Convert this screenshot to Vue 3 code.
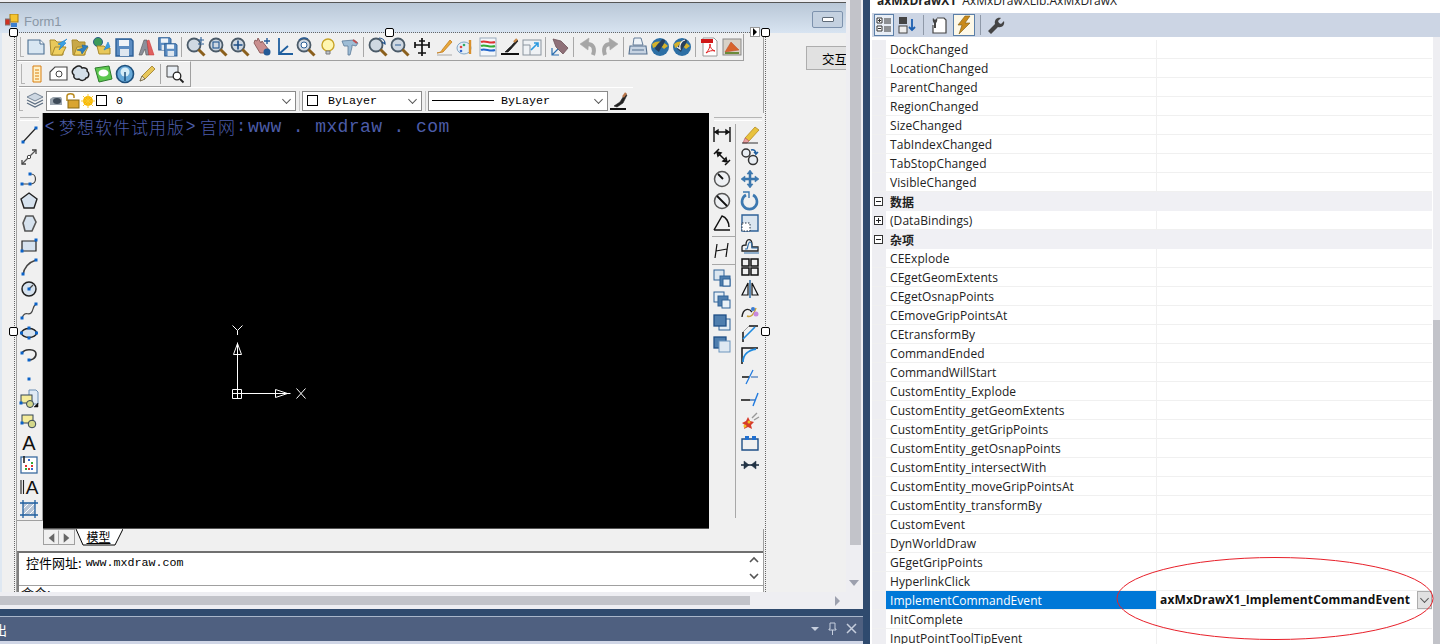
<script setup>
const n = (x, y) => `<rect x="${x - 1.5}" y="${y - 1.5}" width="3" height="3" fill="#0a62c8"/>`
const p = (d, s = '#333', w = 1.2, f = 'none') => `<path d="${d}" stroke="${s}" stroke-width="${w}" fill="${f}"/>`
const mag = inner => `<circle cx="8" cy="8" r="6.500" fill="#cfd8e2" stroke="#4a5a68" stroke-width="1.800"/>${inner}<path d="M12.500 12.500L18.500 18.500" stroke="#8a5f1c" stroke-width="3"/>`
const folder = (c, a) => p('M2 3h5l2 2h6v13H3z', '#a98a2d', 1, c) + p('M4 18l3-8h11l-4 8z', '#a98a2d', 1, '#f0d060') + a
const floppy = (x, y, s) => `<g transform="translate(${x} ${y}) scale(${s})">${p('M1 1h15l2 2v15H1z', '#2d5f96', 1.4, '#5b8cc2')}<rect x="4" y="2" width="10" height="6" fill="#eef3f8"/><rect x="5" y="11" width="9" height="7" fill="#dfe7ef"/></g>`
const sq = (a, b, ca, cb) => `<rect x="${a}" y="${a}" width="10" height="10" fill="${ca}" stroke="#2f6298"/><rect x="${b}" y="${b}" width="10" height="10" fill="${cb}" stroke="#2f6298"/>`
const globe = `<circle cx="10" cy="10" r="9" fill="#2c6fa5"/><path d="M2 7c5-4 11-3 16 2l-4 3c-3-3-7-3-11-1z" fill="#d4b22c"/><path d="M9 15c2-5 6-8 6-12l-3-1c-1 3-6 5-7 10z" fill="#26405e"/>`

const icons = {
  nw: p('M2 3h12l4 4v10H2z', '#4c6f92', 1.1, '#d8e6f2') + p('M14 3v4h4', '#4c6f92', 1, '#fff'),
  open: folder('#e8c85a', p('M19 2l-9 5 3 1-2 5 7-7-2-1z', '#1c7fc9', .6, '#3aa0e4')),
  openw: folder('#c8a848', p('M18 9l-6 8-1-3-4-1 6-2-1-3z', '#1c5f99', .6, '#2c7fc4')),
  webopen: `<circle cx="6" cy="5" r="4.500" fill="#3c9a5a" stroke="#2b5d88"/>` + p('M5 9h7l2 2h4v6H7z', '#a98a2d', 1, '#e8c85a') + p('M16 5l-4 8 6-3z', '#1c7fc9', .6, '#3aa0e4'),
  save: floppy(1, 1, 1),
  saveas: p('M3 18L8 3h3l2 15h-3l-1-6-3 6z', '#555', .6, '#8b8f9a') + p('M11 4l2-1 5 15h-5z', '#c93030', .5, '#e06060'),
  saveall: floppy(0, 0, .72) + floppy(6, 6, .72),
  zoompm: mag('') + p('M15 0v6M12 3h6M12 7h6', '#2d5f96', 1.1),
  zoomw: mag(`<rect x="5" y="5" width="6" height="6" fill="none" stroke="#2d5f96" stroke-width="1.200"/>`),
  zoompan: mag(p('M8 3.500v9M3.500 8h9', '#1c4e88', 1.6)),
  hand: p('M2 6l6 10h7l2-3-7-9-1 2-3-5-1 3-2-1z', '#7f4d4d', .8, '#c98f8f') + `<circle cx="15" cy="15" r="3.500" fill="#245a96"/>` + p('M15 1v6M12 4h6', '#245a96', 1.4),
  ucs: p('M5 1v16h14M5 17l9-8', '#1f5f9f', 1.8),
  orbit: mag(`<circle cx="8" cy="8" r="3" fill="#fff" stroke="#2d5f96"/>`) + p('M3 3a8 8 0 0 1 9-1', '#2d5f96', 1.4),
  bulb: `<circle cx="10" cy="8" r="6" fill="#fff6b0" stroke="#c8a428" stroke-width="1.400"/>` + p('M8 14h4v3H8z', '#7b7b7b', 1, '#bfc6cc'),
  hammer: p('M2 4l12-1 4 3-2 3-4-1v2l-2 8H8V9H4z', '#5a7a98', .8, '#9ebdd6') + p('M13 3l4 3', '#c05050', 2),
  rtzoom: mag('') + p('M11 1c4 0 6 3 6 6l-3-2', '#1c4e88', 1.2),
  zoom2: mag(`<path d="M5 8h6" stroke="#2d5f96"/>`),
  plane: p('M10 1v18M3 8h14M6 16h8M7 4h6M3 5v6M17 5v6', '#111', 1.7),
  pen: p('M3 16c4-1 4-1 5-3l8-10 2 2-9 10z', '#c27b1c', .8, '#e8a93c') + p('M3 18h15', '#aaa', 1),
  palette: `<ellipse cx="8" cy="11" rx="7" ry="6" fill="#e4eef6" stroke="#7fa6c8"/><circle cx="5" cy="10" r="1.300" fill="#d44"/><circle cx="8" cy="8" r="1.300" fill="#3a6"/><circle cx="5" cy="14" r="1.300" fill="#36c"/>` + p('M14 3v14', '#d9902c', 2.4),
  stripes: `<rect x="2" y="1" width="16" height="18" fill="#f2f6fa" stroke="#9ab"/>` + p('M3 5c4-2 9 2 14 0', '#d33', 2) + p('M3 9c4-2 9 2 14 0', '#3a3', 2) + p('M3 13c4-2 9 2 14 0', '#26c', 2),
  brush: p('M1 17h18', '#111', 2) + p('M5 15l4-4c3-2 5-6 8-8l1 1c-2 3-5 5-7 8l-3 3z', '#111', .6, '#222') + p('M14 5l3-3', '#c98a4a', 2.4),
  viewlink: `<rect x="1" y="3" width="18" height="15" fill="#eff2f5" stroke="#8a949e"/>` + p('M1 8h7v10', '#8a949e', 1) + p('M9 13l7-7M12 6h4v4', '#2c9ae0', 1.6),
  tag: p('M3 2l8 2 7 7-5 6-7-7z', '#6d5258', .8, '#8f7078') + p('M2 11v7h7M2 18l6-6', '#2c6fb0', 1.2),
  undo: p('M15 18c2-6 1-11-6-11', '#a6a6a6', 4) + p('M11 1L2 7l8 6z', '#a6a6a6', .5, '#a6a6a6'),
  redo: p('M5 18c-2-6-1-11 6-11', '#a6a6a6', 4) + p('M9 1l9 6-8 6z', '#a6a6a6', .5, '#a6a6a6'),
  printer: p('M6 1h7l2 7H5z', '#55708f', .9, '#eef3f8') + p('M2 9h16l1 8H1z', '#55708f', 1.100, '#c6d3e2') + p('M4 13h12', '#55708f', 1),
  globe1: globe,
  globe2: globe + p('M13 3c-4 1-6 5-5 9l-3-2', '#f2f2f2', 1.2),
  pdf: `<path d="M3 1h11l3 3v15H3z" fill="#fff" stroke="#9a9a9a"/><rect x="1" y="2" width="12" height="4" fill="#d01818"/>` + p('M6 16c3-3 4-6 4-9 0 4 2 6 5 7-3-1-6 0-9 2z', '#e02020', 1),
  img: `<rect x="1" y="2" width="18" height="16" fill="#d8d2c8" stroke="#8a8a8a"/>` + p('M3 15L9 5l8 8z', '#b94a2c', .5, '#d8642c') + p('M3 16h14', '#6a8a3a', 2),
  prop: p('M6 2h8v16H6z', '#d87f10', 1, '#fff1c8') + p('M8 6h4M8 9h4M8 12h4M8 15h4', '#d87f10', 1),
  cloudrect: p('M1 8l5-5h12v13H1z', '#444', 1.1, '#fff') + `<circle cx="10" cy="10" r="3" fill="none" stroke="#444"/>`,
  cloud: p('M5 3c2-2 5-1 6 1 3-1 6 1 5 3 3 2 2 7-1 7-1 3-5 3-7 1-3 1-6-1-5-4-3-2-2-6 2-8z', '#222', 1.5, '#d4dfe9'),
  note: `<path d="M2 4l14-2 3 13-13 3z" fill="#5dc84f" stroke="#2d7a2d"/><ellipse cx="10.500" cy="9" rx="5" ry="3.500" fill="#fff"/>`,
  wipe: `<circle cx="10" cy="10" r="8.500" fill="#66a8d8" stroke="#1d4f7c" stroke-width="1.600"/><circle cx="10" cy="8" r="4.500" fill="#d6edf8"/>` + p('M10 8v9', '#1d4f7c', 1.5),
  pencil: p('M3 17l2-5L15 2l3 3L8 15z', '#9b7a24', .8, '#e8c75a') + p('M3 17l2-5 3 3z', '#333', .5, '#efe2c0'),
  zoomdoc: p('M2 2h11v11H2z', '#444', 1, '#e8eef4') + `<circle cx="12" cy="12" r="3.800" fill="#fff" stroke="#222" stroke-width="1.300"/>` + p('M15 15l3.500 3.500', '#222', 1.8),
  layers: p('M10 2l8 4-8 4-8-4z', '#5a6c80', .8, '#cdd7e2') + p('M2 9l8 4 8-4M2 12l8 4 8-4', '#5a6c80', 1.2),
  linebrush: p('M1 18h16', '#111', 2, 'none') + p('M5 15l6-4 5-8 2 1-4 8-6 4z', '#222', .6, '#222') + p('M14 6l3-4', '#b9764a', 2.4),

  line: p('M4 17L17 3', '#222') + n(4, 17) + n(17, 3),
  xline: p('M3 17L17 3', '#555') + `<circle cx="10" cy="10" r="1.700" fill="#fff" stroke="#444"/>` + p('M3 13v4h4M13 3h4v4', '#444', 1.3),
  pline: p('M3 15h9c6 0 6-10 0-10', '#444') + n(3, 15) + n(11, 15) + n(11, 5),
  pent: p('M10 2l8 6-3 9H5L2 8z', '#222', 1.4, '#d6e2ee'),
  poly: p('M7 3h7l3 6-4 9H6L4 10z', '#555', 1.6, '#d6e2ee'),
  rect: p('M3 6h14v10H3z', '#222', 1.2, '#d6e2ee') + n(3, 16) + n(17, 5),
  arc: p('M4 18C5 10 11 5 17 3', '#444', 1.4) + n(4, 17) + n(17, 3),
  circle: `<circle cx="10" cy="10" r="7" fill="#d6e2ee" stroke="#222" stroke-width="1.500"/>` + p('M10 10l4-4', '#444') + n(10, 10),
  spline: p('M3 17c3-8 6-2 9-5s1-6 5-9', '#444', 1.2) + n(3, 17) + n(17, 3),
  ellipse: `<ellipse cx="10" cy="10" rx="7.500" ry="4.500" fill="#d6e2ee" stroke="#222" stroke-width="1.500"/>` + n(10, 5) + n(10, 15) + n(2.500, 10) + n(17.500, 10),
  ellarc: p('M3 8c3-5 14-4 14 1s-5 6-7 6', '#333', 1.6) + n(3, 8) + n(10, 15),
  point: n(10, 12),
  block1: p('M10 1h7l2 2v12h-9z', '#6b8fb5', 1, '#e0eaf4') + `<rect x="2" y="6" width="11" height="8" fill="#f5ec9a" stroke="#345"/><circle cx="11" cy="15" r="3.500" fill="#d4d88a" stroke="#345"/>` + p('M15 18l4-4v4z', '#111', .5, '#111') + n(2, 14),
  block2: `<rect x="3" y="4" width="11" height="8" fill="#f5ec9a" stroke="#345"/><circle cx="13" cy="13" r="3.800" fill="#d4d88a" stroke="#345"/>` + n(3, 12),
  a: `<text x="10" y="17" text-anchor="middle" font-family="Liberation Sans" font-size="20" fill="#111">A</text>`,
  table: `<rect x="2" y="2" width="16" height="16" fill="#fff" stroke="#3b6ca0" stroke-width="1.300"/><rect x="9" y="4" width="2" height="2" fill="#36c"/><rect x="12" y="7" width="2" height="2" fill="#3a3"/><rect x="6" y="10" width="2" height="2" fill="#d33"/><rect x="9" y="13" width="2" height="2" fill="#d33"/><rect x="12" y="13" width="2" height="2" fill="#36c"/><rect x="6" y="13" width="2" height="2" fill="#3a3"/><rect x="12" y="10" width="2" height="2" fill="#d33"/>` + p('M5 1v7', '#222', 1.6),
  ia: p('M2 3v14M4.500 3v14', '#222', 1.1) + `<text x="13" y="17" text-anchor="middle" font-family="Liberation Sans" font-size="19" fill="#111">A</text>`,
  hatch: `<rect x="4" y="4" width="12" height="12" fill="#b9c6d6"/>` + p('M4 10l6-6M4 16L16 4M10 16l6-6', '#fff', 1) + p('M1 4h18M1 16h18M4 1v18M16 1v18', '#1f5f9f', 1.3),

  dimlin: p('M2 2v15M18 2v15M3 7h14M3 7l3-2v4zM17 7l-3-2v4z', '#111', 1.4),
  dimal: p('M2 7l5-5M13 18l5-5M5 5l10 10M5 5l1 4 3-3zM15 15l-1-4-3 3z', '#111', 1.5),
  dimrad: `<circle cx="10" cy="10" r="7.500" fill="#eef0f3" stroke="#555" stroke-width="1.500"/>` + p('M6 5l5 5', '#111', 1.8),
  dimdia: `<circle cx="10" cy="10" r="7.500" fill="#eef0f3" stroke="#555" stroke-width="1.500"/>` + p('M5 5l10 10', '#111', 1.8),
  dimang: p('M2 17h16M2 17L10 3c4 1 7 6 7 11', '#111', 1.5),
  dimbase: p('M5 4L3 18M16 3l-2 14M4 11l11-2', '#111', 1.2),
  st1: sq(2, 8, '#dbe6f0', '#4f7eae') + `<rect x="11" y="11" width="7" height="7" fill="#eaf1f7" stroke="#2f6298"/>`,
  st2: sq(2, 6, '#e6eef5', '#4f7eae') + `<rect x="10" y="10" width="8" height="8" fill="#eaf1f7" stroke="#2f6298"/>`,
  st3: `<rect x="7" y="7" width="11" height="11" fill="#e6eef5" stroke="#2f6298"/><rect x="2" y="3" width="12" height="11" fill="#4f7eae" stroke="#1f4f86" stroke-width="1.300"/>`,
  st4: `<rect x="2" y="3" width="12" height="11" fill="#4f7eae" stroke="#1f4f86" stroke-width="1.300"/><rect x="7" y="7" width="11" height="11" fill="#dfe9f2" stroke="#6d95bd"/>`,
  erase: p('M5 13L15 2l4 3L9 16z', '#b58a20', .8, '#e8c23c') + p('M5 13l4 3-2 2H3z', '#b55', .6, '#e9a0a0') + p('M2 18h16', '#333', 1),
  copy: `<circle cx="6" cy="6" r="4" fill="#e9eef3" stroke="#333" stroke-width="1.500"/><circle cx="13" cy="13" r="4.500" fill="#e9eef3" stroke="#333" stroke-width="1.500"/>` + p('M11 3c3-1 5 1 5 4l2-2M16 7l-2-2', '#1f5f9f', 1.6),
  move: p('M10 1l3 4h-2v4h4V7l4 3-4 3v-2h-4v4h2l-3 4-3-4h2v-4H5v2l-4-3 4-3v2h4V5H7z', '#2f6ca5', .5, '#3c78b0'),
  rotate: p('M6 4a7.500 7.500 0 1 0 7 0', '#3c78b0', 2.6) + p('M3 1h6v6', '#3c78b0', 1.4),
  scale: p('M2 2h16v16H2z', '#2f6298', 1.4, '#dbe6f0') + `<rect x="2" y="10" width="8" height="8" fill="#fff" stroke="#234" stroke-dasharray="1.500 1.500"/>`,
  offset: p('M2 16v-4c0-2 3-2 4-2 0-7 6-7 6-1v3h6v4z', '#222', 1.3) + p('M4 18h15M5 14h2c1-1 1-7 3-7s2 3 2 6h6', '#2f6ca5', 1.2),
  array: p('M2 2h7v7H2zM11 2h7v7h-7zM2 11h7v7H2zM11 11h7v7h-7z', '#111', 1.5),
  mirror: p('M10 1v18', '#2f6ca5', 1.5) + p('M8 4v12H2zM12 4v12h6z', '#111', 1.2, '#eef2f6'),
  blend: p('M2 16c1-9 7-9 10-5', '#222', 1.4) + p('M7 15c4 2 7-2 9-8', '#c8a03c', 1.4) + `<circle cx="16" cy="13" r="2.500" fill="#c78add"/><circle cx="13" cy="8" r="2" fill="#3a7bd0"/>`,
  chamfer: p('M3 19V9', '#111', 1.5) + p('M9 3h9', '#111', 1.5) + p('M3 9l6-6', '#888', .8, 'none') + p('M3 16L15 4', '#1f8adf', 1.6),
  fillet: p('M2 19V3h16', '#111', 1.5) + p('M3 17c0-8 6-12 13-13', '#1f8adf', 1.8),
  trim: p('M2 10h7', '#111', 1.5) + p('M11 10h7', '#1f5fb0', 1, 'none') + p('M6 17L13 3', '#1f7adf', 1.3),
  extend: p('M1 11h9', '#111', 1.5) + p('M10 11h5', '#1f5fb0', 1.2) + p('M13 17l5-13', '#1f7adf', 1.4),
  explode: `<path d="M2 12l4-2 2-4 2 4 4 1-3 3 1 4-4-2-4 2 1-4z" fill="#d63a2a"/><circle cx="5" cy="15" r="1.500" fill="#f0c020"/><circle cx="9" cy="11" r="1.500" fill="#f0c020"/>` + p('M12 7l5-5M14 9l5-3', '#999', 1.4),
  stretch: p('M2 17V6h16v11z', '#1f4f86', 1.4) + `<rect x="5" y="3" width="4" height="4" fill="#1f6fd0"/><rect x="12" y="3" width="4" height="4" fill="#1f6fd0"/>`,
  join: p('M1 10h18', '#234', 1.6) + p('M4 6l5 4-5 4zM16 6l-5 4 5 4z', '#234', .5, '#234'),
}

const row1 = ['nw', 'open', 'openw', 'webopen', 'save', 'saveas', 'saveall', '|', 'zoompm', 'zoomw', 'zoompan', 'hand', 'ucs', 'orbit', 'bulb', 'hammer', '|', 'rtzoom', 'zoom2', 'plane', 'pen', 'palette', 'stripes', 'brush', 'viewlink', '|', 'tag', '|', 'undo', 'redo', '|', 'printer', 'globe1', 'globe2', '|', 'pdf', 'img']
const row2 = ['prop', 'cloudrect', 'cloud', 'note', 'wipe', 'pencil', '|', 'zoomdoc']
const leftBar = ['line', 'xline', 'pline', 'pent', 'poly', 'rect', 'arc', 'circle', 'spline', 'ellipse', 'ellarc', 'point', 'block1', 'block2', 'a', 'table', 'ia', 'hatch']
const dimBar = ['dimlin', 'dimal', 'dimrad', 'dimdia', 'dimang', '-', 'dimbase', '-', 'st1', 'st2', 'st3', 'st4']
const editBar = ['erase', 'copy', 'move', 'rotate', 'scale', 'offset', 'array', 'mirror', 'blend', 'chamfer', 'fillet', 'trim', 'extend', 'explode', 'stretch', 'join']

const rows = [
  'DockChanged', 'LocationChanged', 'ParentChanged', 'RegionChanged', 'SizeChanged', 'TabIndexChanged', 'TabStopChanged', 'VisibleChanged',
  { cat: '数据' }, { name: '(DataBindings)', plus: true }, { cat: '杂项' },
  'CEExplode', 'CEgetGeomExtents', 'CEgetOsnapPoints', 'CEmoveGripPointsAt', 'CEtransformBy', 'CommandEnded', 'CommandWillStart',
  'CustomEntity_Explode', 'CustomEntity_getGeomExtents', 'CustomEntity_getGripPoints', 'CustomEntity_getOsnapPoints', 'CustomEntity_intersectWith', 'CustomEntity_moveGripPointsAt', 'CustomEntity_transformBy',
  'CustomEvent', 'DynWorldDraw', 'GEgetGripPoints', 'HyperlinkClick',
  { name: 'ImplementCommandEvent', value: 'axMxDrawX1_ImplementCommandEvent' },
  'InitComplete', 'InputPointToolTipEvent',
].map(r => (typeof r === 'string' ? { name: r } : r))
</script>

<template>
  <div class="screen">
    <div class="left">
      <div class="design">
        <div class="form">
          <div class="titlebar">
            <svg class="form-ico" width="14" height="14" viewBox="0 0 14 14"><rect x="5" y="0" width="8" height="8" fill="#f4c430" stroke="#a97c10"/><rect x="0" y="5" width="5" height="6" fill="#d03020" stroke="#777"/><rect x="6" y="9" width="6" height="4" fill="#3d7fd0"/></svg>
            <span class="form-title">Form1</span>
            <span class="minbtn"><i></i></span>
          </div>
          <div class="client">
            <div class="control">
              <span class="handle h-tl"></span><span class="handle h-tc"></span><span class="handle h-tr"></span>
              <span class="handle h-ml"></span><span class="handle h-mr"></span>
              <span class="smart"></span>

              <div class="bar bar1">
                <span class="grip"></span>
                <template v-for="(ic, i) in row1" :key="i">
                  <span v-if="ic === '|'" class="sep"></span>
                  <svg v-else class="ico" viewBox="0 0 20 20" v-html="icons[ic]"></svg>
                </template>
              </div>
              <div class="bar bar2">
                <span class="grip"></span>
                <template v-for="(ic, i) in row2" :key="i">
                  <span v-if="ic === '|'" class="sep"></span>
                  <svg v-else class="ico" viewBox="0 0 20 20" v-html="icons[ic]"></svg>
                </template>
              </div>
              <div class="bar bar3">
                <span class="grip"></span>
                <svg class="ico" viewBox="0 0 20 20" v-html="icons.layers"></svg>
                <div class="combo combo-a">
                  <svg width="46" height="16" viewBox="0 0 46 16">
                    <path d="M1 6l3-2h8l1 2v6H1z" fill="#9aa4ae"/><ellipse cx="8" cy="8" rx="4" ry="3" fill="#3d4a58"/>
                    <path d="M18 8V3c0-3 7-3 7 0v2" fill="none" stroke="#b98a20" stroke-width="1.500"/><rect x="19" y="7" width="11" height="8" fill="#d9a530" stroke="#8a6a14"/>
                    <circle cx="39" cy="8" r="5" fill="#f8b800"/><path d="M39 1v14M32 8h14M34 3l10 10M44 3L34 13" stroke="#f8c830"/>
                  </svg>
                  <span class="swatch swatch-a"></span>
                  <span class="mono zero">0</span>
                  <span class="chev chev-end"></span>
                </div>
                <span class="thin-sep"></span>
                <div class="combo combo-b">
                  <span class="swatch"></span>
                  <span class="mono by1">ByLayer</span>
                  <span class="chev chev-end"></span>
                </div>
                <span class="thin-sep"></span>
                <div class="combo combo-c">
                  <span class="lt"></span>
                  <span class="mono by2">ByLayer</span>
                  <span class="chev chev-end"></span>
                </div>
                <svg class="ico brush-ico" viewBox="0 0 20 20" v-html="icons.linebrush"></svg>
              </div>

              <div class="middle">
                <div class="lefttools">
                  <span class="hgrip"></span>
                  <svg v-for="ic in leftBar" :key="ic" class="ico tool" viewBox="0 0 20 20" v-html="icons[ic]"></svg>
                </div>
                <div class="canvas">
                  <div class="wm">
                    <span class="lt-ch">&lt;</span><span class="cjk">梦想软件试用版</span><span class="lt-ch">&gt;</span><span class="cjk">官网</span><span class="colon">:</span><span class="url">www . mxdraw . com</span>
                  </div>
                  <svg class="ucs" width="90" height="85" viewBox="0 0 90 85">
                    <g fill="none" stroke="#fff" stroke-width="1">
                      <path d="M5.500 2.500l5 5 5-5M10.500 7.500V12"/>
                      <path d="M6.500 31.500h8l-4-11zM10.500 31.500v-12"/>
                      <path d="M10.500 31.500V66M14.500 70.500H48"/>
                      <path d="M5.500 66.500h9v9h-9zM10.500 66.500v9M5.500 70.500h9"/>
                      <path d="M48.500 66.500v8l12-4zM48.500 70.500h15"/>
                      <path d="M69.500 65.500l9 10M78.500 65.500l-9 10"/>
                    </g>
                  </svg>
                </div>
                <div class="righttools">
                  <span class="hgrip wide"></span>
                  <div class="tool-cols">
                    <div class="tcol dim">
                      <template v-for="(ic, i) in dimBar" :key="i">
                        <span v-if="ic === '-'" class="hsep"></span>
                        <svg v-else class="ico tool" viewBox="0 0 20 20" v-html="icons[ic]"></svg>
                      </template>
                    </div>
                    <div class="tcol">
                      <svg v-for="ic in editBar" :key="ic" class="ico tool" viewBox="0 0 20 20" v-html="icons[ic]"></svg>
                    </div>
                  </div>
                </div>
              </div>

              <div class="tabs">
                <span class="tabnav">
                  <svg width="32" height="16" viewBox="0 0 32 16"><path d="M11 3v10L5 8z" fill="#666"/><path d="M15.500 0v16" stroke="#a0a0a0"/><path d="M21 3v10l6-5z" fill="#666"/></svg>
                </span>
                <span class="tab">
                  <svg class="tabshape" width="48" height="17" viewBox="0 0 48 17"><path d="M1 0l7 16h32l8-16" fill="#fff" stroke="#000"/></svg>
                  <span class="tabtext">模型</span>
                </span>
              </div>

              <div class="cmd">
                <div class="cmd-main">
                  <div class="cmd-top"><span class="cmd-cjk">控件网址:</span><span class="mono cmd-url">www.mxdraw.com</span></div>
                  <div class="cmd-input">命令:</div>
                </div>
                <div class="cmd-scroll">
                  <svg width="10" height="30" viewBox="0 0 10 30"><path d="M1 8l4-4 4 4M1 20l4 4 4-4" fill="none" stroke="#555" stroke-width="1.600"/></svg>
                </div>
              </div>
            </div>
            <button class="form-btn">交互</button>
          </div>
        </div>
        <div class="vscroll">
          <span class="vthumb"></span>
          <span class="downarrow"></span>
        </div>
      </div>
      <div class="hscroll">
        <span class="hthumb"></span>
        <span class="rightarrow"></span>
      </div>
      <div class="output">
        <div class="out-title">
          <span class="out-name">输出</span>
          <svg class="out-tools" width="46" height="14" viewBox="0 0 46 14">
            <path d="M0 5h8l-4 4z" fill="#c6cedd"/>
            <path d="M19 1h5v6h1v1h-7V7h1zM21.500 8v5" fill="none" stroke="#c6cedd"/>
            <path d="M36 2l9 9M45 2l-9 9" stroke="#c6cedd" stroke-width="1.500"/>
          </svg>
        </div>
      </div>
    </div>

    <div class="props">
      <div class="ptitle"><b>axMxDrawX1</b> <span>AxMxDrawXLib.AxMxDrawX</span></div>
      <div class="ptool">
        <span class="pbtn active">
          <svg width="16" height="16" viewBox="0 0 16 16"><path d="M1 1h5v5H1zM1 9h5v5H1z" fill="#fff" stroke="#333"/><path d="M2 3.500h3M2 11.500h3M3.500 2v3M8 2h7M8 4h7M8 6h7M8 10h7M8 12h7M8 14h7" stroke="#333"/></svg>
        </span>
        <span class="pbtn">
          <svg width="20" height="18" viewBox="0 0 20 18"><rect x="1" y="1" width="8" height="7" fill="#444"/><rect x="1" y="10" width="8" height="7" fill="#eee" stroke="#444"/><path d="M14 3v11M11 11l3 3 3-3" fill="none" stroke="#1c5fb0" stroke-width="1.800"/></svg>
        </span>
        <span class="psep"></span>
        <span class="pbtn">
          <svg width="18" height="18" viewBox="0 0 18 18"><path d="M7 2h7l2 2v13H3V9" fill="#fff" stroke="#444" stroke-width="1.200"/><path d="M3 2l2 2 2-2c1 3-1 5-1 5v5H4V7S2 5 3 2z" fill="#444"/></svg>
        </span>
        <span class="pbtn active warm">
          <svg width="16" height="20" viewBox="0 0 16 20"><path d="M9 1h5L9 8h5L3 19l3-9H2z" fill="#c98a1a" stroke="#7a5a14" stroke-width=".6"/></svg>
        </span>
        <span class="psep"></span>
        <span class="pbtn">
          <svg width="18" height="18" viewBox="0 0 18 18"><path d="M1 15l7-7c-1-4 2-7 6-6l-3 3 1 2 2 1 3-3c1 4-2 7-6 6l-7 7z" fill="#444"/></svg>
        </span>
      </div>
      <div class="plist">
        <template v-for="r in rows" :key="r.name || r.cat">
          <div v-if="r.cat" class="prow cat">
            <span class="gutter"><i class="box minus"></i></span>
            <span class="catname">{{ r.cat }}</span>
          </div>
          <div v-else class="prow" :class="{ sel: r.value }">
            <span class="gutter"><i v-if="r.plus" class="box plus"></i></span>
            <span class="pname">{{ r.name }}</span>
            <span class="pval">
              <b v-if="r.value">{{ r.value }}</b>
              <span v-if="r.value" class="ddbtn"><i class="chev"></i></span>
            </span>
          </div>
        </template>
      </div>
      <div class="pscroll"><span class="pthumb"></span></div>
      <svg class="annot" width="320" height="86" viewBox="0 0 320 86"><ellipse cx="159" cy="42.500" rx="158" ry="41" fill="none" stroke="#e8202a" stroke-width="1"/></svg>
    </div>
  </div>
</template>

<style>
html, body { margin: 0; overflow: hidden; background: #f0f0f0; }
</style>

<style scoped>
.screen { width: 1440px; height: 644px; display: flex; overflow: hidden; position: relative; font-family: "Open Sans", "Noto Sans CJK SC", sans-serif; background: #e8e8ee; }
.left { width: 870px; flex: none; display: flex; flex-direction: column; border-right: 7px solid #2f4a6e; box-sizing: border-box; background: #eeeef2; }
.design { height: 592px; display: flex; flex: none; overflow: hidden; }
.form { width: 846px; flex: none; display: flex; flex-direction: column; overflow: hidden; margin-top: 2px; border-top: 1px solid #555; }
.titlebar { height: 30px; flex: none; display: flex; align-items: center; background: linear-gradient(#b9c7d7, #d8e4f1); padding-left: 5px; position: relative; box-sizing: border-box; padding-top: 6px; }
.form-title { color: #8a97a6; font-family: "Liberation Sans", sans-serif; font-size: 13px; margin-left: 5px; }
.form-ico { flex: none; }
.minbtn { margin-left: auto; margin-right: 3px; width: 31px; height: 17px; border: 1px solid #7d92ad; border-radius: 2px; box-sizing: border-box; background: #c4d1e0; display: flex; align-items: center; justify-content: center; margin-top: -4px; }
.minbtn i { width: 10px; height: 3px; border: 1px solid #5f6b78; background: #fff; border-radius: 1px; }
.client { flex: 1; display: flex; background: #f0f0f0; border-left: 2px solid #dfe8f2; min-height: 0; }
.control { width: 748px; flex: none; margin-left: 14px; position: relative; outline: 1px dotted #666; outline-offset: 1px; box-sizing: border-box; border-left: 1px solid #a0a0a0; border-right: 1px solid #a0a0a0; margin-top: 1px; }
.handle { position: absolute; width: 7px; height: 7px; border: 1px solid #000; background: #fff; border-radius: 2px; z-index: 3; }
.h-tl { left: -8px; top: -6px; }
.h-tc { left: 368px; top: -6px; }
.h-tr { left: 744px; top: -6px; }
.h-ml { left: -8px; top: 293px; }
.h-mr { left: 744px; top: 293px; }
.smart { position: absolute; left: 733px; top: -7px; width: 8px; height: 8px; background: #fff; border: 1px solid #999; z-index: 3; }
.smart::after { content: ""; position: absolute; left: 2px; top: 0; border-left: 4px solid #000; border-top: 4px solid transparent; border-bottom: 4px solid transparent; }

.bar { display: flex; align-items: center; box-sizing: border-box; background: #f0f0f0; }
.bar1 { height: 27px; width: 727px; border-bottom: 1px solid #a0a0a0; border-right: 1px solid #a0a0a0; padding-left: 5px; }
.bar2 { height: 26px; width: 172px; margin-left: 2px; border-bottom: 1px solid #a0a0a0; border-right: 1px solid #a0a0a0; padding-left: 4px; border-top: 1px solid #fff; }
.bar3 { height: 26px; width: 616px; padding-left: 4px; border-top: 1px solid #fff; }
.grip { width: 3px; height: 19px; border-left: 1px solid #b5b5b5; border-bottom: 1px solid #b5b5b5; flex: none; margin-right: 1px; margin-left: -2px; }
.ico { width: 20px; height: 20px; margin: 0 1px; flex: none; }
.sep { width: 1px; height: 20px; background: #a8a8a8; margin: 0 3px 0 2px; flex: none; }
.combo { height: 20px; background: #fff; border: 1px solid #8a8a8a; box-sizing: border-box; display: flex; align-items: center; position: relative; flex: none; }
.combo-a { width: 250px; padding-left: 2px; }
.combo-b { width: 120px; padding-left: 4px; }
.combo-c { width: 180px; padding-left: 3px; }
.thin-sep { width: 1px; height: 20px; background: #c8c8c8; margin: 0 2px 0 3px; flex: none; }
.swatch { width: 9px; height: 9px; border: 1px solid #000; flex: none; }
.swatch-a { margin-left: 1px; }
.mono { font-family: "Liberation Mono", monospace; font-size: 11.670px; color: #000; }
.zero { margin-left: 9px; }
.by1 { margin-left: 10px; }
.by2 { margin-left: 7px; }
.lt { width: 62px; height: 1px; background: #000; flex: none; }
.chev { display: block; width: 6px; height: 6px; border-right: 1px solid #555; border-bottom: 1px solid #555; transform: rotate(45deg) scale(.9); }
.chev-end { position: absolute; right: 5px; top: 4px; }
.brush-ico { margin-left: 1px; }

.middle { display: flex; height: 416px; }
.lefttools { width: 25px; height: 407px; flex: none; border-right: 1px solid #a0a0a0; border-bottom: 1px solid #a0a0a0; box-sizing: content-box; display: flex; flex-direction: column; align-items: center; background: #f0f0f0; }
.lefttools .tool { transform: translateX(-1px); }
.hgrip { width: 19px; height: 2px; border-top: 1px solid #b5b5b5; border-bottom: 1px solid #fff; margin: 4px 0 3px; flex: none; display: block; }
.hgrip.wide { width: 48px; }
.tool { margin: 1px 0; }
.canvas { width: 666px; height: 415px; background: #000; flex: none; position: relative; border-bottom: 1px solid #555; overflow: hidden; }
.wm { position: absolute; left: 1px; top: 4px; color: #4c5ca8; font-size: 17px; line-height: 20px; white-space: nowrap; display: flex; }
.lt-ch { font-family: "Liberation Mono", monospace; font-size: 18px; width: 15px; display: inline-block; transform: scaleX(.9); }
.cjk { letter-spacing: 1px; font-weight: 300; font-family: "Noto Sans CJK SC", sans-serif; }
.colon { width: 12px; font-family: "Liberation Mono", monospace; }
.url { font-family: "Liberation Mono", monospace; font-size: 18px; letter-spacing: .4px; font-weight: 400; }
.ucs { position: absolute; left: 184px; top: 210px; }
.righttools { width: 54px; flex: none; margin-left: 2px; background: #f0f0f0; display: flex; flex-direction: column; align-items: center; height: 416px; }
.tool-cols { display: flex; width: 100%; }
.tcol { display: flex; flex-direction: column; align-items: center; width: 27px; box-sizing: border-box; }
.tcol.dim { border-right: 1px solid #a8a8a8; height: 394px; width: 25px; }
.tcol.dim .tool { transform: translateX(-1px); }
.hsep { width: 23px; height: 1px; background: #a8a8a8; margin: 2px 0 2px; flex: none; }
.tool + .hsep ~ .hsep { margin-top: 3px; }
.tabs { display: flex; height: 17px; padding-left: 26px; background: #f0f0f0; }
.tabnav { width: 32px; height: 16px; border: 1px solid #a0a0a0; box-sizing: border-box; display: flex; background: #f0f0f0; overflow: hidden; }
.tab { position: relative; width: 48px; height: 17px; display: flex; justify-content: center; }
.tabshape { position: absolute; left: 0; top: 0; }
.tabtext { position: relative; font-size: 12px; line-height: 16px; text-decoration: underline; color: #000; font-family: "Noto Sans CJK SC", sans-serif; margin-left: -1px; }
.cmd { margin: 5px 0 0 0; border-top: 2px solid #707070; border-left: 2px solid #808080; background: #fff; display: flex; height: 60px; box-sizing: border-box; }
.cmd-main { flex: 1; }
.cmd-top { height: 33px; border-bottom: 1px solid #a0a0a0; padding-left: 7px; display: flex; align-items: center; padding-bottom: 13px; box-sizing: border-box; margin-right: -18px; }
.cmd-cjk { font-family: "Noto Sans CJK SC", sans-serif; font-size: 13px; color: #000; margin-right: 4px; }
.cmd-url { font-size: 11.670px; }
.cmd-input { font-family: "Noto Sans CJK SC", sans-serif; font-size: 13px; line-height: 14px; padding-left: 2px; color: #222; }
.cmd-scroll { width: 18px; flex: none; height: 31px; position: relative; z-index: 1; display: flex; justify-content: center; padding-top: 1px; box-sizing: border-box; background: #fff; }
.form-btn { margin: 13px 0 0 42px; width: 62px; height: 24px; background: #e1e1e1; border: 1px solid #adadad; font-family: "Noto Sans CJK SC", sans-serif; font-size: 12.500px; text-align: left; padding: 0 0 0 15px; flex: none; color: #000; }

.vscroll { flex: 1; position: relative; background: #eeeef2; }
.vthumb { position: absolute; left: 4px; top: 0; width: 11px; height: 545px; background: #c2c3c9; }
.downarrow { position: absolute; left: 3px; top: 580px; border-top: 6px solid #9ca0ae; border-left: 5px solid transparent; border-right: 5px solid transparent; }
.hscroll { height: 17px; flex: none; position: relative; background: #eeeef2; box-sizing: border-box; }
.hthumb { position: absolute; left: 0; top: 4px; width: 750px; height: 9px; background: #c2c3c9; }
.rightarrow { position: absolute; left: 835px; top: 4px; border-left: 5px solid #9ca0ae; border-top: 5px solid transparent; border-bottom: 5px solid transparent; }
.output { flex: 1; background: linear-gradient(#2f4a6e 0 7px, #d0d6e6 7px); }
.out-title { height: 24px; margin-top: 7px; border-top: 1px solid #a9b6ca; background: #4f6080; display: flex; align-items: center; color: #fff; overflow: hidden; position: relative; }
.out-name { font-family: "Noto Sans CJK SC", sans-serif; font-size: 13px; margin-left: -19px; }
.out-tools { margin-left: auto; margin-right: 6px; }

.props { flex: 1; position: relative; background: #fff; min-width: 0; display: flex; flex-direction: column; overflow: hidden; }
.ptitle { height: 13px; flex: none; overflow: hidden; font-size: 12px; line-height: 2px; padding-left: 7px; color: #222; white-space: nowrap; background: #fff; }
.ptitle b { margin-right: 3px; }
.ptool { height: 24px; flex: none; margin-left: 2px; background: #ccd5e4; display: flex; align-items: center; padding-left: 2px; gap: 4px; }
.pbtn { width: 20px; height: 22px; display: flex; align-items: center; justify-content: center; box-sizing: border-box; flex: none; }
.pbtn.active { border: 1px solid #5b7fa8; background: #e8eef6; }
.pbtn.warm { background: #fdf8e8; width: 22px; }
.psep { width: 1px; height: 20px; background: #8f99a8; margin: 0 1px; flex: none; }
.plist { margin: 3px 8px 0 2px; flex: 1; overflow: hidden; min-height: 0; background: #f0f0f4; }
.prow { height: 19px; display: flex; box-sizing: border-box; border-bottom: 1px solid #f0f0f0; background: #fff; font-size: 12px; line-height: 20px; letter-spacing: .07px; color: #222; }
.gutter { width: 14px; flex: none; background: #eeeef2; position: relative; box-sizing: content-box; border-bottom: 1px solid #eeeef2; }
.pname { width: 271px; flex: none; padding-left: 4px; box-sizing: border-box; white-space: nowrap; border-right: 1px solid #f0f0f0; overflow: hidden; }
.pval { flex: 1; position: relative; display: flex; align-items: center; padding-left: 3px; }
.pval b { font-weight: 700; color: #111; white-space: nowrap; letter-spacing: .15px; }
.prow.sel .pname { background: #0078d7; color: #fff; }
.ddbtn { position: absolute; right: 0; top: 0; width: 15px; height: 18px; background: #e1e1e1; border: 1px solid #adadad; box-sizing: border-box; display: flex; align-items: center; justify-content: center; }
.ddbtn .chev { margin-top: -3px; }
.prow.cat { background: #f0f0f4; border-bottom: none; font-weight: 700; line-height: 19px; }
.catname { padding-left: 4px; font-family: "Noto Sans CJK SC", sans-serif; font-size: 12px; color: #222; }
.box { position: absolute; left: 2px; top: 5px; width: 9px; height: 9px; border: 1px solid #333; box-sizing: border-box; background: #fff; }
.box::before { content: ""; position: absolute; left: 1px; top: 3px; width: 5px; height: 1px; background: #222; }
.plus::after { content: ""; position: absolute; left: 3px; top: 1px; width: 1px; height: 5px; background: #222; }
.pscroll { position: absolute; right: 0; top: 37px; bottom: 0; width: 7px; background: #eeeef2; }
.pthumb { position: absolute; left: 0; top: 283px; bottom: 0; width: 7px; background: #c2c3c9; }
.annot { position: absolute; left: 246px; top: 556px; pointer-events: none; }
</style>
